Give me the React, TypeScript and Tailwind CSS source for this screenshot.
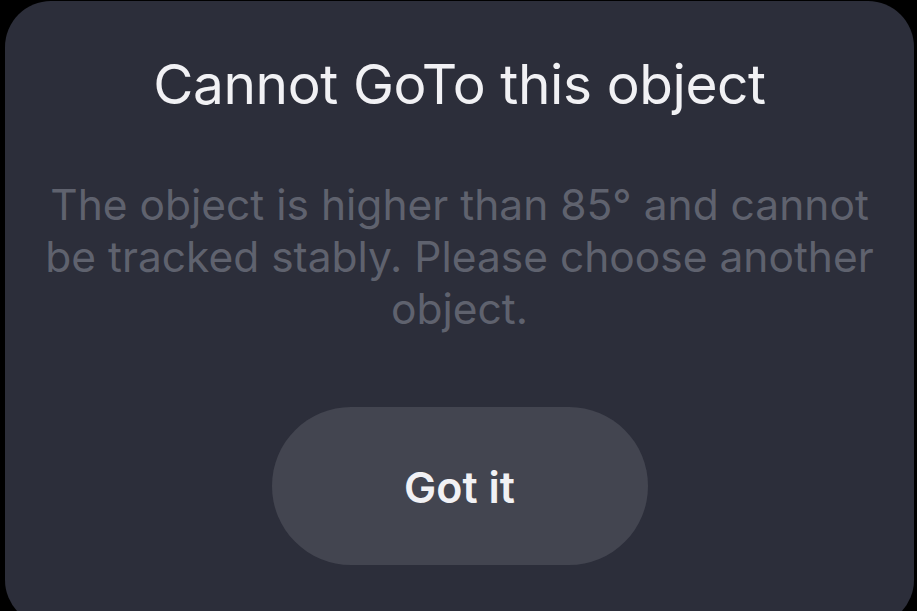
export default function App() {
  return (
    <div className="w-[917px] h-[611px] bg-black overflow-hidden" style={{ fontFamily: 'Inter, "Noto Sans", sans-serif' }}>
      <div className="ml-[5px] mt-[1px] w-[909px] h-[625px] rounded-[46px] bg-[#2c2e3a] flex flex-col items-center pt-[50px]">
        <h1 className="text-[55px] leading-[66px] text-[#f1f1f4] font-normal tracking-[-0.4px]">Cannot GoTo this object</h1>
        <p className="mt-[62px] w-[880px] text-center text-[42.5px] leading-[52px] text-[#5f626e]">
          The object is higher than 85° and cannot be tracked stably. Please choose another object.
        </p>
        <button className="mt-[72px] w-[376px] h-[158px] rounded-full bg-[#434550] text-[#f1f1f4] text-[43px] font-semibold pt-[2px]">
          Got it
        </button>
      </div>
    </div>
  );
}
